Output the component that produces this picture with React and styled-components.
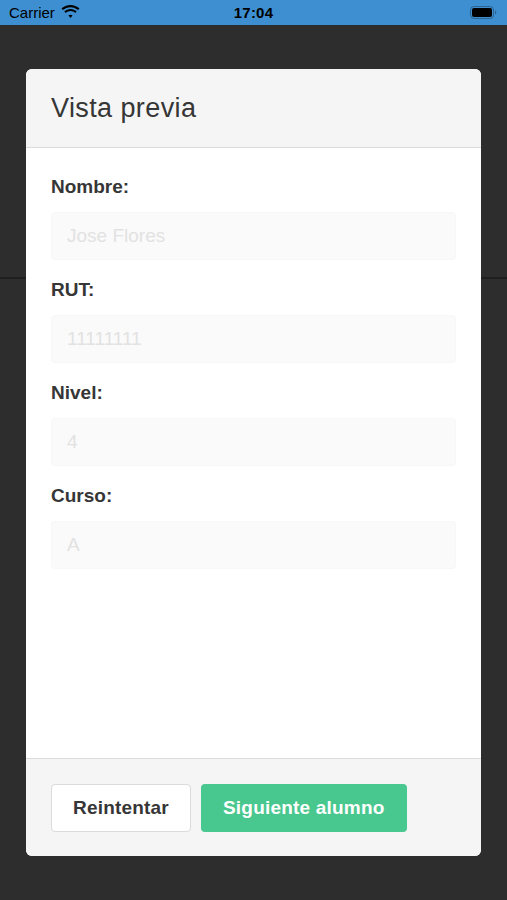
import styled, { createGlobalStyle } from "styled-components";

const GlobalStyle = createGlobalStyle`
    html, body {
        margin: 0;
        padding: 0;
        background: #2d2d2d;
        font-family: "Liberation Sans", Arial, sans-serif;
    }
`

const fields = [
    { label: "Nombre:", value: "Jose Flores" },
    { label: "RUT:", value: "11111111" },
    { label: "Nivel:", value: "4" },
    { label: "Curso:", value: "A" },
];

const Wifi = () => (
    <svg width="19" height="14" viewBox="0 0 19 14">
        <path d="M9.5 2.2c2.9 0 5.5 1.1 7.5 2.9l1.5-1.6C16.1 1.3 12.9 0 9.5 0S2.9 1.3.5 3.5L2 5.1c2-1.8 4.6-2.9 7.5-2.9z" fill="#000" />
        <path d="M9.5 6.1c1.8 0 3.4.7 4.7 1.8l1.5-1.6c-1.7-1.5-3.9-2.4-6.2-2.4S5 4.8 3.3 6.3l1.5 1.6c1.3-1.1 2.9-1.8 4.7-1.8z" fill="#000" />
        <path d="M9.5 9.8c.8 0 1.5.3 2 .7L9.5 13l-2-2.5c.5-.4 1.2-.7 2-.7z" fill="#000" />
    </svg>
);

const Battery = () => (
    <svg width="27" height="13" viewBox="0 0 27 13">
        <rect x="0.5" y="0.5" width="23" height="12" rx="3.5" fill="none" stroke="#1a3a55" strokeOpacity="0.5" />
        <rect x="2" y="2" width="20" height="9" rx="2" fill="#000" />
        <path d="M25 4.5v4c.8-.3 1.3-1.1 1.3-2s-.5-1.7-1.3-2z" fill="#1a3a55" fillOpacity="0.5" />
    </svg>
);

const App = () => {
    return (
        <>
        <GlobalStyle />
        <Screen>
            <StatusBar>
                <Carrier>
                    Carrier <Wifi />
                </Carrier>
                <Clock>17:04</Clock>
                <BatteryBox>
                    <Battery />
                </BatteryBox>
            </StatusBar>
            <PageBehind />
            <Modal>
                <Header>
                    <Title>Vista previa</Title>
                </Header>
                <Body>
                    {fields.map((f) => (
                        <Field key={f.label}>
                            <Label>{f.label}</Label>
                            <Input disabled placeholder={f.value} />
                        </Field>
                    ))}
                </Body>
                <Footer>
                    <Button>Reintentar</Button>
                    <Button $success>Siguiente alumno</Button>
                </Footer>
            </Modal>
        </Screen>
        </>
    );
}

export default App;

const Screen = styled.div`
    position: relative;
    width: 507px;
    height: 900px;
    background: #2d2d2d;
    overflow: hidden;
`

const StatusBar = styled.div`
    height: 25px;
    background: #3d8fd1;
    display: grid;
    grid-template-columns: 1fr auto 1fr;
    align-items: center;
    padding: 0 9px;
    font-size: 15px;
    color: #000;
`

const Carrier = styled.div`
    display: flex;
    align-items: center;
    gap: 6px;
    svg {
        margin-top: -2px;
    }
`

const Clock = styled.div`
    font-weight: bold;
    letter-spacing: 0.2px;
`

const BatteryBox = styled.div`
    display: flex;
    justify-content: flex-end;
    padding-right: 1px;
`

const PageBehind = styled.div`
    height: 252px;
    border-bottom: 2px solid #1f1f1f;
`

const Modal = styled.div`
    position: absolute;
    left: 26px;
    top: 69px;
    width: 455px;
    height: 787px;
    display: flex;
    flex-direction: column;
    border-radius: 6px;
    overflow: hidden;
    background: #fff;
`

const Header = styled.header`
    height: 78px;
    background: #f5f5f5;
    border-bottom: 1px solid #dbdbdb;
    display: flex;
    align-items: center;
    padding: 0 25px;
    flex-shrink: 0;
`

const Title = styled.h1`
    margin: 0;
    font-size: 27px;
    font-weight: normal;
    letter-spacing: 0.4px;
    color: #363636;
    padding-top: 1px;
`

const Body = styled.div`
    flex: 1;
    padding: 27px 25px 0;
    display: flex;
    flex-direction: column;
    gap: 18px;
`

const Field = styled.div`
    display: flex;
    flex-direction: column;
`

const Label = styled.label`
    font-size: 19px;
    line-height: 24px;
    font-weight: bold;
    color: #363636;
    margin-bottom: 13px;
`

const Input = styled.input`
    box-sizing: border-box;
    height: 48px;
    width: 100%;
    border: 1px solid #f7f7f7;
    border-radius: 4px;
    background: #fafafa;
    padding: 0 15px;
    font-family: inherit;
    font-size: 19px;
    &::placeholder {
        color: #e2e2e2;
    }
`

const Footer = styled.footer`
    height: 98px;
    box-sizing: border-box;
    background: #f5f5f5;
    border-top: 1px solid #dbdbdb;
    display: flex;
    align-items: center;
    gap: 10px;
    padding: 0 25px;
    flex-shrink: 0;
`

const Button = styled.button`
    box-sizing: border-box;
    height: 48px;
    padding: 0 21px;
    border-radius: 4px;
    font-family: inherit;
    font-size: 19px;
    font-weight: bold;
    letter-spacing: 0.2px;
    border: 1px solid ${(p) => (p.$success ? "transparent" : "#dbdbdb")};
    background: ${(p) => (p.$success ? "#48c78e" : "#fff")};
    color: ${(p) => (p.$success ? "#fff" : "#363636")};
`
